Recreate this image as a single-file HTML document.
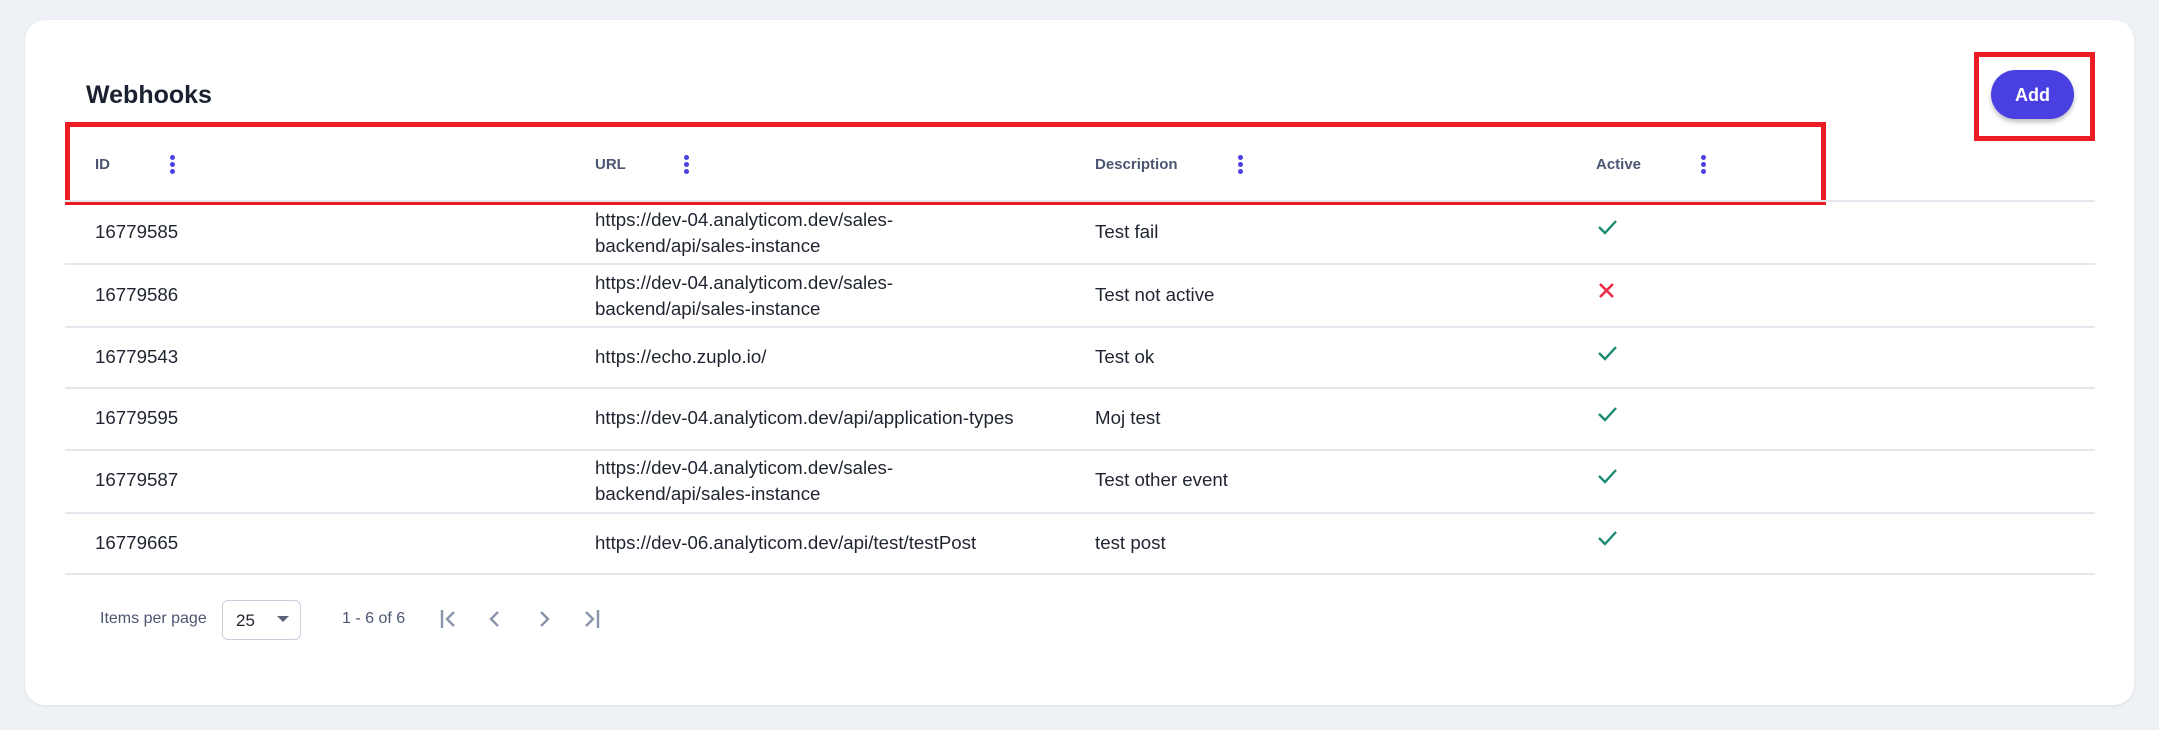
<!DOCTYPE html>
<html><head><meta charset="utf-8"><style>
*{box-sizing:border-box;margin:0;padding:0}
body{width:2159px;height:730px;background:#eef1f5;font-family:"Liberation Sans",sans-serif;position:relative;overflow:hidden}
.card{position:absolute;left:25px;top:20px;width:2109px;height:685px;background:#fff;border-radius:20px;box-shadow:0 1px 3px rgba(0,0,0,.08)}
.a{position:absolute}
.t{font-size:18.7px;color:#1f2430;line-height:26px}
.h{font-size:15px;font-weight:bold;color:#4b5672}
.line{position:absolute;left:65px;width:2030px;height:2px;background:#e3e7ee}
.dots{position:absolute;width:4px}
.dots i{display:block;width:5px;height:5px;border-radius:50%;background:#4a3fe0;margin-bottom:2px}
.red{position:absolute;border:5px solid #ec1c24}
</style></head><body>
<div class="card"></div>
<div class="a" style="left:86px;top:81px;font-size:25px;font-weight:bold;color:#1a2130">Webhooks</div>
<div class="a" style="left:1991px;top:70px;width:83px;height:49px;border-radius:25px;background:#4a3fe0;color:#fff;font-weight:bold;font-size:18px;text-align:center;line-height:51px;box-shadow:0 3px 5px rgba(0,0,0,.25)">Add</div>
<div class="red" style="left:1974px;top:52px;width:121px;height:89px"></div>

<div class="a h" style="left:95px;top:156px">ID</div>
<div class="dots" style="left:170px;top:155px"><i></i><i></i><i></i></div>
<div class="a h" style="left:595px;top:156px">URL</div>
<div class="dots" style="left:684px;top:155px"><i></i><i></i><i></i></div>
<div class="a h" style="left:1095px;top:156px">Description</div>
<div class="dots" style="left:1238px;top:155px"><i></i><i></i><i></i></div>
<div class="a h" style="left:1596px;top:156px">Active</div>
<div class="dots" style="left:1701px;top:155px"><i></i><i></i><i></i></div>
<div class="red" style="left:65px;top:122px;width:1761px;height:83px"></div>

<div class="line" style="top:200px"></div>
<div class="line" style="top:263px"></div>
<div class="line" style="top:326px"></div>
<div class="line" style="top:387px"></div>
<div class="line" style="top:449px"></div>
<div class="line" style="top:512px"></div>
<div class="line" style="top:573px"></div>

<div class="a t" style="left:95px;top:219px">16779585</div>
<div class="a t" style="left:595px;top:207px">https://dev-04.analyticom.dev/sales-<br>backend/api/sales-instance</div>
<div class="a t" style="left:1095px;top:219px">Test fail</div>

<div class="a t" style="left:95px;top:282px">16779586</div>
<div class="a t" style="left:595px;top:270px">https://dev-04.analyticom.dev/sales-<br>backend/api/sales-instance</div>
<div class="a t" style="left:1095px;top:282px">Test not active</div>

<div class="a t" style="left:95px;top:344px">16779543</div>
<div class="a t" style="left:595px;top:344px">https://echo.zuplo.io/</div>
<div class="a t" style="left:1095px;top:344px">Test ok</div>

<div class="a t" style="left:95px;top:405px">16779595</div>
<div class="a t" style="left:595px;top:405px">https://dev-04.analyticom.dev/api/application-types</div>
<div class="a t" style="left:1095px;top:405px">Moj test</div>

<div class="a t" style="left:95px;top:467px">16779587</div>
<div class="a t" style="left:595px;top:455px">https://dev-04.analyticom.dev/sales-<br>backend/api/sales-instance</div>
<div class="a t" style="left:1095px;top:467px">Test other event</div>

<div class="a t" style="left:95px;top:530px">16779665</div>
<div class="a t" style="left:595px;top:530px">https://dev-06.analyticom.dev/api/test/testPost</div>
<div class="a t" style="left:1095px;top:530px">test post</div>

<svg class="a" style="left:1597px;top:218px" width="22" height="18"><path d="M2 9 L8 15 L19 3" stroke="#1a8a72" stroke-width="2.4" fill="none"/></svg>
<svg class="a" style="left:1598px;top:282px" width="18" height="18"><path d="M2 2 L15 15 M15 2 L2 15" stroke="#ec2b45" stroke-width="2.6" fill="none"/></svg>
<svg class="a" style="left:1597px;top:344px" width="22" height="18"><path d="M2 9 L8 15 L19 3" stroke="#1a8a72" stroke-width="2.4" fill="none"/></svg>
<svg class="a" style="left:1597px;top:405px" width="22" height="18"><path d="M2 9 L8 15 L19 3" stroke="#1a8a72" stroke-width="2.4" fill="none"/></svg>
<svg class="a" style="left:1597px;top:467px" width="22" height="18"><path d="M2 9 L8 15 L19 3" stroke="#1a8a72" stroke-width="2.4" fill="none"/></svg>
<svg class="a" style="left:1597px;top:529px" width="22" height="18"><path d="M2 9 L8 15 L19 3" stroke="#1a8a72" stroke-width="2.4" fill="none"/></svg>

<div class="a" style="left:100px;top:610px;font-size:16px;color:#4b5672">Items per page</div>
<div class="a" style="left:222px;top:600px;width:79px;height:40px;border:1px solid #c8d0dc;border-radius:6px"></div>
<div class="a" style="left:236px;top:611px;font-size:17px;color:#1f2430">25</div>
<svg class="a" style="left:277px;top:616px" width="12" height="8"><path d="M0 0 L12 0 L6 6Z" fill="#5a6478"/></svg>
<div class="a" style="left:342px;top:610px;font-size:16px;color:#4b5672">1 - 6 of 6</div>
<svg class="a" style="left:436px;top:606px" width="170" height="26" fill="none" stroke="#8895ab" stroke-width="2.4">
<path d="M6 4 V22 M18 6 L11 13 L18 20"/>
<path d="M62 6 L55 13 L62 20"/>
<path d="M105 6 L112 13 L105 20"/>
<path d="M150 6 L157 13 L150 20 M162 4 V22"/>
</svg>
</body></html>
